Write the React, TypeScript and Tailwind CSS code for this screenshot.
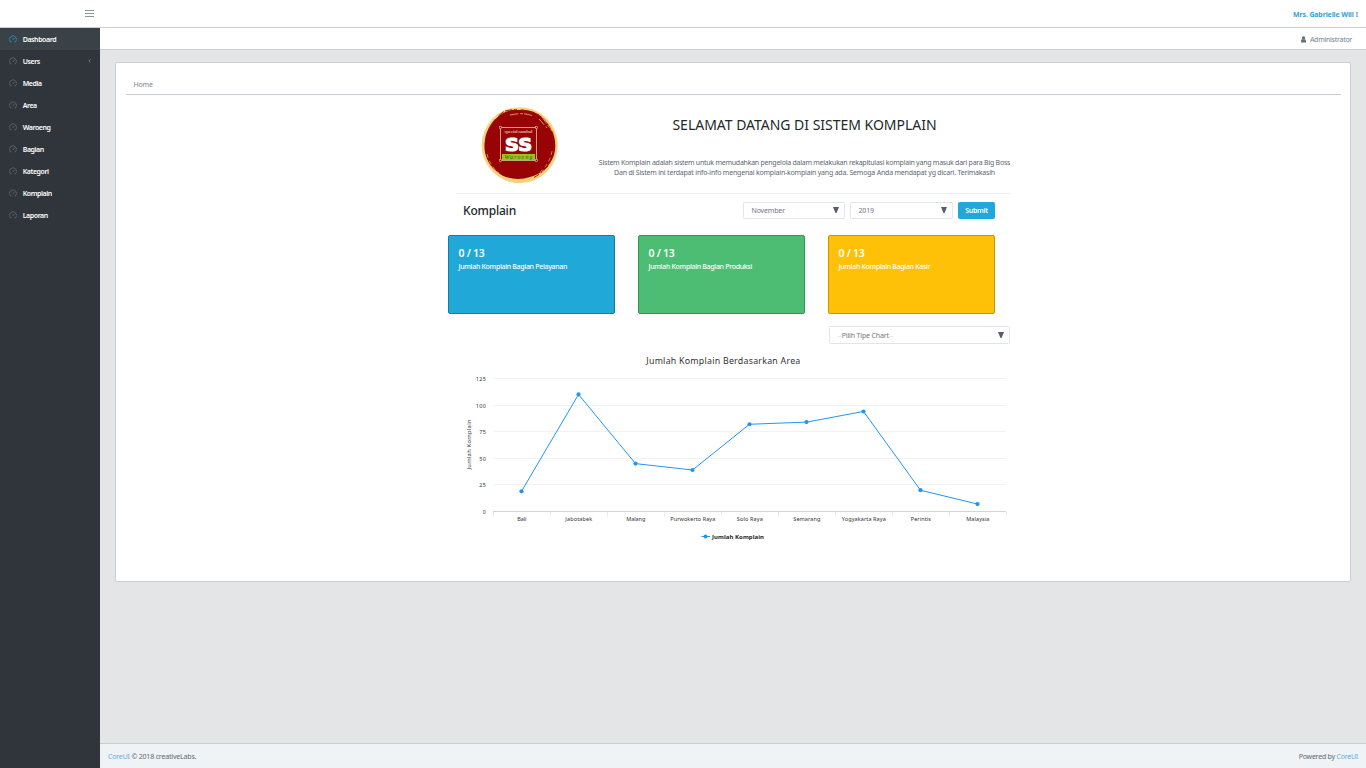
import React from "react";

const menu = ["Dashboard", "Users", "Media", "Area", "Waroeng", "Bagian", "Kategori", "Komplain", "Laporan"];

const areas: { name: string; value: number; width: number }[] = [
  { name: "Bali", value: 19, width: 9 },
  { name: "Jabotabek", value: 110, width: 27 },
  { name: "Malang", value: 45, width: 19 },
  { name: "Purwokerto Raya", value: 39, width: 45 },
  { name: "Solo Raya", value: 82, width: 26 },
  { name: "Semarang", value: 84, width: 27 },
  { name: "Yogyakarta Raya", value: 94, width: 44 },
  { name: "Perintis", value: 20, width: 20 },
  { name: "Malaysia", value: 7, width: 23 },
];

const stats = [
  { label: "Jumlah Komplain Bagian Pelayanan", style: "bg-[#20a8d8] border-[#187da0]" },
  { label: "Jumlah Komplain Bagian Produksi", style: "bg-[#4dbd74] border-[#379457]" },
  { label: "Jumlah Komplain Bagian Kasir", style: "bg-[#ffc107] border-[#c69500]" },
];

function Gauge({ active }: { active: boolean }) {
  return (
    <svg viewBox="0 0 16 16" className={"ml-[0.5px] h-[8px] w-[8px] " + (active ? "text-[#20a8d8]" : "text-[#66737f]")} fill="none" stroke="currentColor" strokeWidth="1.4">
      <path d="M5 13.8H3.2A7 7 0 1 1 12.8 13.8H11" />
      <path d="M7.8 9.6L11 6" strokeWidth="1.8" />
    </svg>
  );
}

function Select({ label, box, dashed }: { label: string; box: string; dashed?: boolean }) {
  return (
    <div className={"flex items-center justify-between rounded-[1.5px] border border-[#e1e5e8] bg-white pl-[7.5px] pr-[5px] text-[#73757f] " + box}>
      {dashed ? (
        <span className="pt-px tracking-[-0.16px]">
          <span className="text-[#d9d2d8]">--</span>
          {label}
          <span className="text-[#d9d2d8]">--</span>
        </span>
      ) : (
        <span className="tracking-[-0.15px]">{label}</span>
      )}
      <svg className="-mt-px h-[6px] w-[6px]" viewBox="0 0 6 6">
        <path d="M0 0H6L5 2.5L3.5 6H2.5L1 2.5Z" fill="#56606a" />
      </svg>
    </div>
  );
}

function Logo() {
  return (
    <svg className="h-[78px] w-[78px]" viewBox="0 0 78 78">
      <circle cx="38.7" cy="39.2" r="38" fill="#f6d27a" />
      <path
        d="M39 4C49 3 61 8 67 18C74 27 76 39 73 49C69 61 60 68 49 71C37 75 23 73 14 64C5 56 2 44 4 34C6 19 18 6 31 4Z"
        fill="#980306"
      />
      <path d="M24 5Q40 1 58 9M8 23Q14 11 24 5" fill="none" stroke="#a81c10" strokeWidth="1" strokeDasharray="7 2 3 4" />
      <path d="M29 9Q43 6 52 10M58 13L66 22M61 11L71 25" fill="none" stroke="#f6d27a" strokeWidth=".7" strokeDasharray="8 2 3 1" />
      <path d="M71 29Q76 43 68 57M67 60Q60 68 52 72M8 54Q15 66 25 71" fill="none" stroke="#981508" strokeWidth="1" strokeDasharray="6 2 2 2" />
      <path d="M6 48Q9 60 18 67M71 45Q69 58 58 67" fill="none" stroke="#f6d27a" strokeWidth=".6" strokeDasharray="4 3" />
      <rect x="19.5" y="21.5" width="36" height="33" fill="none" stroke="#cf9f92" strokeWidth="1" />
      <g fill="#980306" stroke="#d9b5a5" strokeWidth=".6">
        <rect x="18.4" y="20.4" width="2.2" height="2.2" />
        <rect x="54.4" y="20.4" width="2.2" height="2.2" />
        <rect x="18.4" y="53.4" width="2.2" height="2.2" />
        <rect x="54.4" y="53.4" width="2.2" height="2.2" />
      </g>
      <text x="37.5" y="27.3" textAnchor="middle" textLength="28" fontFamily="Liberation Serif, serif" fontWeight="700" fontSize="5" fill="#e0a69a">special sambal</text>
      <text x="37.6" y="44.8" textAnchor="middle" textLength="27" lengthAdjust="spacingAndGlyphs" fontFamily="DejaVu Sans, sans-serif" fontWeight="700" fontSize="18.5" fill="#fff" stroke="#fff" strokeWidth="1.2">SS</text>
      <rect x="21" y="48" width="33" height="6.3" fill="#9bc51c" />
      <text x="37.5" y="53" textAnchor="middle" textLength="28" fontFamily="Liberation Serif, serif" fontStyle="italic" fontSize="6" fill="#3c570e">Waroeng</text>
    </svg>
  );
}

function Chart() {
  const px = (i: number) => 73.5 + i * 57;
  const py = (v: number) => 155.5 - (v * 133) / 125;
  return (
    <svg className="block h-[204px] w-[562px]" viewBox="0 -4 562 204" fontFamily="Noto Sans, sans-serif">
      <text x="275.3" y="8" textAnchor="middle" textLength="154" fontSize="8.8" fill="#333">Jumlah Komplain Berdasarkan Area</text>
      {[125, 100, 75, 50, 25, 0].map((v) => {
        const y = Math.floor(py(v)) + 0.5;
        return (
          <g key={v}>
            <path d={`M45 ${y}H558`} stroke={v === 0 ? "#ccd3e2" : "#f2f2f2"} />
            <text x="38.2" y={y + 2.2} textAnchor="end" fontSize="5.5" letterSpacing=".3" fill="#333">{v}</text>
          </g>
        );
      })}
      {Array.from({ length: 10 }, (_, i) => (
        <path key={i} d={`M${i === 9 ? 558.5 : 45.5 + i * 57} 156V161`} stroke="#e8ebf2" />
      ))}
      <text transform="translate(23 88.5) rotate(-90)" textAnchor="middle" textLength="50" fontSize="5.8" fill="#333">Jumlah Komplain</text>
      <polyline points={areas.map((a, i) => `${px(i)},${py(a.value)}`).join(" ")} fill="none" stroke="#2196f3" strokeWidth="1" />
      {areas.map((a, i) => (
        <g key={a.name}>
          <circle cx={px(i)} cy={py(a.value)} r="2.1" fill="#2196f3" />
          <text x={px(i) + 0.3} y="165" textAnchor="middle" textLength={a.width} fontSize="5.5" fill="#333">{a.name}</text>
        </g>
      ))}
      <path d="M253.5 180.5H262" stroke="#2196f3" />
      <circle cx="257.5" cy="180.5" r="2" fill="#2196f3" />
      <text x="264" y="183" textLength="52" fontSize="6" fontWeight="700" fill="#222">Jumlah Komplain</text>
    </svg>
  );
}

export default function App() {
  return (
    <div className="flex h-[768px] w-[1366px] flex-col overflow-hidden bg-[#e4e5e6] font-['Noto_Sans',sans-serif] text-[7px] leading-[10px] text-[#5c6873]">
      <header className="flex h-[28px] shrink-0 items-center justify-between border-b border-[#c8ced3] bg-white pl-[85px] pr-[8px]">
        <svg className="h-[9px] w-[9px]" viewBox="0 0 9 9">
          <path d="M0 1.5H9M0 4.5H9M0 7.5H9" stroke="#8796a3" />
        </svg>
        <span className="pt-[2px] font-bold tracking-[-0.14px] text-[#369fd3]">
          Mrs. Gabrielle Will <span className="text-[#8d9fe0]">I</span>
        </span>
      </header>

      <div className="flex min-h-0 flex-1">
        <nav className="w-[100px] shrink-0 bg-[#2f353a]">
          {menu.map((m, i) => (
            <div key={m} className={"flex h-[22px] items-center pl-[8px] pr-[9px] " + (i === 0 ? "bg-[#3a4248]" : "")}>
              <Gauge active={i === 0} />
              <span className="ml-[6.2px] flex-1 pt-px font-semibold tracking-[-0.42px] text-white">{m}</span>
              {i === 1 && (
                <svg className="h-[4px] w-[3px]" viewBox="0 0 3 4">
                  <path d="M2.5 .3L.8 2L2.5 3.7" fill="none" stroke="#73818f" strokeWidth=".9" />
                </svg>
              )}
            </div>
          ))}
        </nav>

        <div className="flex min-w-0 flex-1 flex-col">
          <div className="flex h-[22px] shrink-0 items-center justify-end border-b border-[#c8ced3] bg-white pr-[14px] text-[#73818f]">
            <svg className="mt-[2px] mr-[4px] h-[7px] w-[5px]" viewBox="0 0 5 7">
              <circle cx="2.5" cy="1.9" r="1.7" fill="#66707b" />
              <path d="M0 6.5V5Q0 3.2 1.2 3.2H3.8Q5 3.2 5 5V6.5Z" fill="#66707b" />
            </svg>
            <span className="pt-[2px] tracking-[-0.26px]">Administrator</span>
          </div>

          <main className="flex-1 px-[15px] pt-[12px]">
            <section className="h-[520px] rounded-[2px] border border-[#c8ced3] bg-white pl-[10px] pr-[9px]">
              <div className="flex h-[32px] items-end border-b border-[#c8ced3] pb-[4px] pl-[7.5px] tracking-[-0.15px] text-[#83868b]">Home</div>

              <div className="ml-[322px] w-[562px]">
                <div className="flex h-[98px] pt-[12px]">
                  <div className="-mt-px ml-[33px] w-[78px] shrink-0">
                    <Logo />
                  </div>
                  <div className="ml-[33px] w-[425px] shrink-0 text-center">
                    <h1 className="mt-[9px] whitespace-nowrap text-[14px] leading-[18px] tracking-[-0.02px] text-[#23282c]">SELAMAT DATANG DI SISTEM KOMPLAIN</h1>
                    <p className="mt-[24px] whitespace-nowrap tracking-[-0.245px]">Sistem Komplain adalah sistem untuk memudahkan pengelola dalam melakukan rekapitulasi komplain yang masuk dari para Big Boss</p>
                    <p className="whitespace-nowrap tracking-[-0.205px]">Dan di Sistem ini terdapat info-info mengenai komplain-komplain yang ada. Semoga Anda mendapat yg dicari. Terimakasih</p>
                  </div>
                </div>

                <div className="ml-[8px] h-px w-[555px] bg-[#f0f0f1]" />

                <div className="mt-[8px] flex h-[17px] items-center pl-[15px]">
                  <h2 className="-mt-px w-[280px] text-[12px] font-medium leading-[17px] tracking-[-0.2px] text-[#23282c]">Komplain</h2>
                  <Select label="November" box="h-[17px] w-[102px]" />
                  <div className="w-[5px]" />
                  <Select label="2019" box="h-[17px] w-[103px]" />
                  <button className="ml-[5px] h-[17px] w-[37px] rounded-[2px] bg-[#20a8d8] text-[7px] font-semibold tracking-[-0.3px] text-white">Submit</button>
                </div>

                <div className="mt-[16px] flex gap-[23px]">
                  {stats.map((s) => (
                    <div key={s.label} className={"h-[79px] w-[167px] rounded-[2px] border px-[9.5px] pt-[10px] text-white " + s.style}>
                      <div className="text-[10.5px] font-semibold leading-[14px] tracking-[-0.3px]">0 / 13</div>
                      <div className="mt-[2px] whitespace-nowrap font-medium tracking-[-0.31px]">{s.label}</div>
                    </div>
                  ))}
                </div>

                <div className="mt-[12px] flex justify-end">
                  <Select label="Pilih Tipe Chart" box="h-[18px] w-[181px]" dashed />
                </div>

                <div className="mt-[8px]">
                  <Chart />
                </div>
              </div>
            </section>
          </main>

          <footer className="flex h-[25px] shrink-0 items-center justify-between border-t border-[#c8ced3] bg-[#f0f3f5] px-[8px]">
            <span className="pt-[2px] tracking-[-0.18px]"><span className="text-[#69a9d8]">CoreUI</span> © 2018 creativeLabs.</span>
            <span className="pt-[2px] tracking-[-0.22px]">Powered by <span className="text-[#69a9d8]">CoreUI</span></span>
          </footer>
        </div>
      </div>
    </div>
  );
}
